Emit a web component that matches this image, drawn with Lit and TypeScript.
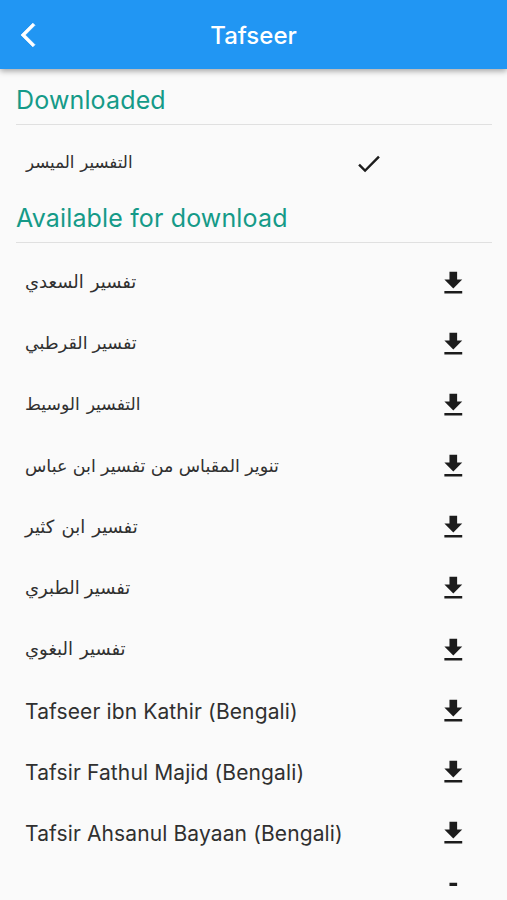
import { LitElement, html, css } from "lit";
import { customElement } from "lit/decorators.js";
import { styleMap } from "lit/directives/style-map.js";

interface Entry { name: string; arabic?: boolean; gap?: number; size?: number }

const available: Entry[] = [
  { name: "تفسير السعدي", arabic: true, gap: 2, size: 18 },
  { name: "تفسير القرطبي", arabic: true, gap: 0 },
  { name: "التفسير الوسيط", arabic: true, gap: 2, size: 17.2 },
  { name: "تنوير المقباس من تفسير ابن عباس", arabic: true, gap: 0.4 },
  { name: "تفسير ابن كثير", arabic: true, gap: 2, size: 18 },
  { name: "تفسير الطبري", arabic: true, gap: 0, size: 18 },
  { name: "تفسير البغوي", arabic: true, gap: 2, size: 18 },
  { name: "Tafseer ibn Kathir (Bengali)" },
  { name: "Tafsir Fathul Majid (Bengali)" },
  { name: "Tafsir Ahsanul Bayaan (Bengali)" },
  { name: "" },
];

@customElement("app-root")
export class AppRoot extends LitElement {
  static styles = css`
    :host { display: flex; flex-direction: column; height: 900px; overflow: hidden; background: #fafafa; font-family: Inter, "DejaVu Sans", sans-serif; color: #303030; }
    header { flex: none; height: 69px; background: #2196f3; color: #fff; display: grid; grid-template-columns: 56px 1fr 56px; align-items: center; box-shadow: 0 2px 6px rgba(0,0,0,.36); position: relative; }
    h1 { margin: 2px 0 0; text-align: center; font-size: 24px; font-weight: 500; }
    h2 { flex: none; margin: 0 15px 0 16px; height: 56px; line-height: 62px; box-sizing: border-box; border-bottom: 1px solid #e0e0e0; color: #159a88; font-size: 25px; font-weight: 400; letter-spacing: .15px; }
    .second { height: 49px; line-height: 48px; }
    .row { height: 61.1px; padding: 0 38px 0 25px; display: flex; align-items: center; justify-content: space-between; font-size: 21px; letter-spacing: .12px; }
    .row span { padding-top: 1px; white-space: nowrap; }
    .first { flex: none; height: 69px; padding-right: 124px; }
    .list { height: 633px; padding-top: 9.7px; overflow: hidden; }
    .row .ar { padding-bottom: 4px; letter-spacing: 0; }
    .first .ar { padding: 5px 0 0 1px; }
    svg { display: block; fill: #1c1c1c; }
    .back { width: 14px; height: 24px; margin: 1px 0 0 21px; overflow: visible; fill: #fff; stroke: #fff; stroke-width: .6; }
    .check { margin-top: 8px; }
  `;

  label(e: Entry) {
    const style = e.arabic ? { wordSpacing: `${e.gap ?? 0}px`, fontSize: `${e.size ?? 17.5}px` } : {};
    return html`<span class=${e.arabic ? "ar" : ""} dir=${e.arabic ? "rtl" : "ltr"} style=${styleMap(style)}>${e.name}</span>`;
  }

  render() {
    return html`
      <header><svg class="back" viewBox="0 2 11.7 20"><path d="M11.670 3.870 9.900 2.100 0 12l9.900 9.900 1.770-1.770L3.540 12z"/></svg><h1>Tafseer</h1></header>
      <h2>Downloaded</h2>
      <div class="row first">${this.label({ name: "التفسير الميسر", arabic: true, gap: 1, size: 16.7 })}
        <svg class="check" width="29.500" height="29.500" viewBox="0 0 24 24"><path d="M9 16.170 4.830 12l-1.420 1.410L9 19 21 7l-1.410-1.410z"/></svg></div>
      <h2 class="second">Available for download</h2>
      <div class="list">${available.map((e) => html`<div class="row">${this.label(e)}
        <svg width="30.600" height="30.600" viewBox="0 0 24 24"><path d="M19 9h-4V3H9v6H5l7 7 7-7zM5 18v2h14v-2z"/></svg></div>`)}</div>`;
  }
}
